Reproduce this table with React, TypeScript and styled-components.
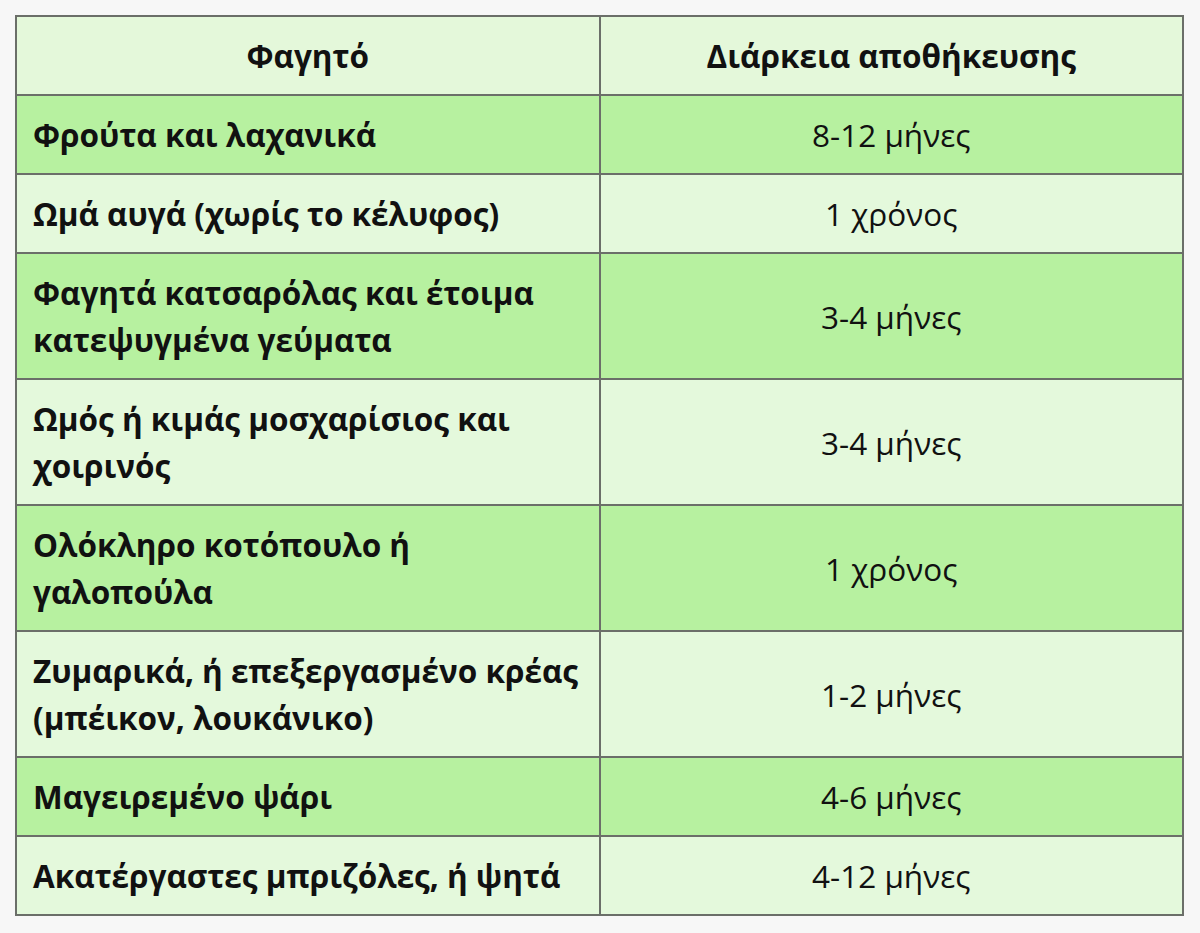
import React from 'react';
import styled, {createGlobalStyle} from "styled-components";

type RowType = {
    food: string
    period: string
}

const rows: RowType[] = [
    {food: "Φρούτα και λαχανικά", period: "8-12 μήνες"},
    {food: "Ωμά αυγά (χωρίς το κέλυφος)", period: "1 χρόνος"},
    {food: "Φαγητά κατσαρόλας και έτοιμα κατεψυγμένα γεύματα", period: "3-4 μήνες"},
    {food: "Ωμός ή κιμάς μοσχαρίσιος και χοιρινός", period: "3-4 μήνες"},
    {food: "Ολόκληρο κοτόπουλο ή γαλοπούλα", period: "1 χρόνος"},
    {food: "Ζυμαρικά, ή επεξεργασμένο κρέας (μπέικον, λουκάνικο)", period: "1-2 μήνες"},
    {food: "Μαγειρεμένο ψάρι", period: "4-6 μήνες"},
    {food: "Ακατέργαστες μπριζόλες, ή ψητά", period: "4-12 μήνες"},
]

const GlobalStyle = createGlobalStyle`
    body {
        margin: 0;
        background-color: #f7f7f7;
        font-family: "Open Sans", "Noto Sans", sans-serif;
        color: #111;
    }
`

export default function App() {
    return (
        <>
            <GlobalStyle/>
            <Page>
                <Table>
                    <thead>
                    <tr>
                        <HeadCell>Φαγητό</HeadCell>
                        <HeadCell>Διάρκεια αποθήκευσης</HeadCell>
                    </tr>
                    </thead>
                    <tbody>
                    {rows.map((r, i) => (
                        <Row key={i} $dark={i % 2 === 0}>
                            <FoodCell>{r.food}</FoodCell>
                            <PeriodCell>{r.period}</PeriodCell>
                        </Row>
                    ))}
                    </tbody>
                </Table>
            </Page>
        </>
    );
}

const Page = styled.div`
    padding: 15px 16px 15px 15px;
`

const Table = styled.table`
    width: 100%;
    border-collapse: collapse;
    table-layout: fixed;
    border: 2px solid #6b6f69;
    font-size: 31.5px;
    line-height: 47px;
`

const HeadCell = styled.th`
    background-color: #e4f8da;
    border: 2px solid #6b6f69;
    padding: 15px 16px;
    font-weight: 700;
    text-align: center;
`

type RowPropsType = {
    $dark: boolean
}

const Row = styled.tr<RowPropsType>`
    background-color: ${props => props.$dark ? "#b7f1a0" : "#e4f9dc"};
`

const FoodCell = styled.td`
    border: 2px solid #6b6f69;
    padding: 15px 16px;
    font-weight: 700;
    text-align: left;
    vertical-align: middle;
`

const PeriodCell = styled.td`
    border: 2px solid #6b6f69;
    padding: 15px 16px;
    font-weight: 400;
    text-align: center;
    vertical-align: middle;
`
